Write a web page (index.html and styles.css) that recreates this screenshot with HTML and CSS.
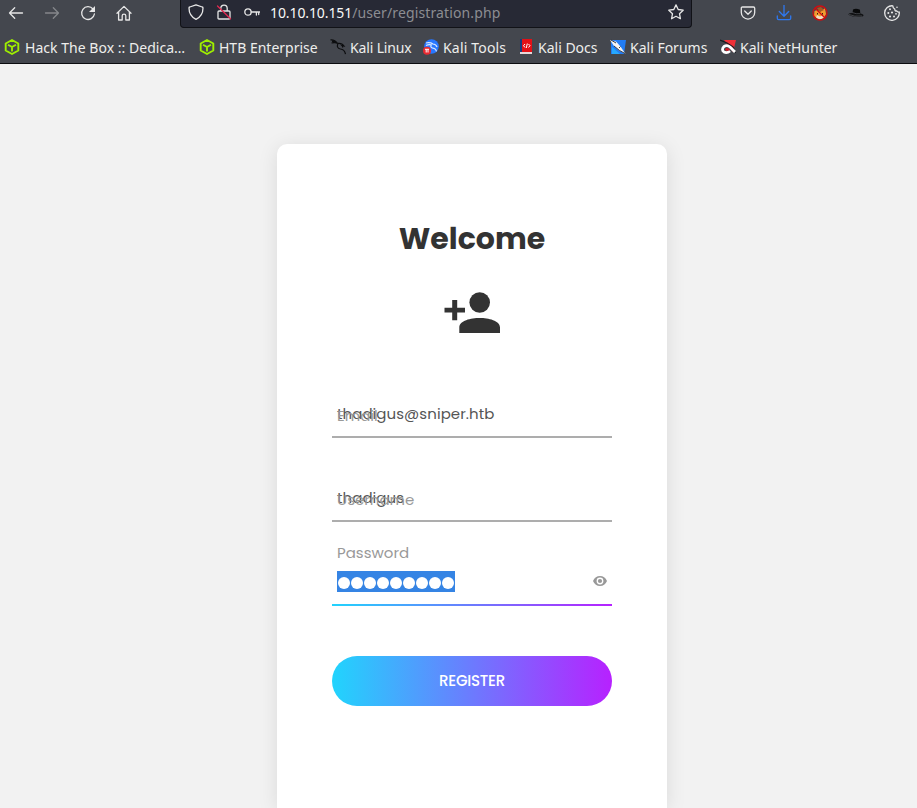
FILE: index.html
```html
<!DOCTYPE html>
<html lang="en">
<head>
<meta charset="utf-8">
<title>Registration</title>
<link rel="stylesheet" href="styles.css">
</head>
<body>
<header class="browser">
  <div class="toolbar">
    <nav class="nav">
      <svg class="ico" viewBox="0 0 16 16"><path d="M14.500 8H1.500M6.700 2.800 1.500 8l5.200 5.200"/></svg>
      <svg class="ico dim" viewBox="0 0 16 16"><path d="M1.500 8h13M9.300 2.800 14.500 8l-5.200 5.200"/></svg>
      <svg class="ico" viewBox="0 0 16 16"><path d="M13 4A6.400 6.400 0 1 0 14.400 9"/><path class="solid" d="M15 1v6H9z"/></svg>
      <svg class="ico" viewBox="0 0 16 16"><path d="M1 8.200 8 1.400l7 6.800M2.600 7v8h3.600v-4.200q0-1.600 1.800-1.600t1.800 1.600V15h3.600V7"/></svg>
    </nav>
    <div class="urlbar">
      <svg class="ico" viewBox="0 0 16 16"><path d="M8 .8 14.200 3Q15 3.200 15 4q0 8-7 11.300Q1 12 1 4q0-.8.8-1z"/></svg>
      <svg class="ico" viewBox="0 0 16 16"><path d="M4.800 7V4.400a3.200 3.200 0 0 1 6.400 0V7M3 7h10q1 0 1 1v6.200q0 .8-1 .8H3q-1 0-1-.8V8q0-1 1-1z"/><path class="slash" d="m1.500 2 13 12.700"/></svg>
      <svg class="ico" viewBox="0 0 16 16"><circle cx="4" cy="8" r="3.200"/><path d="M7.200 8H16M12.400 8v3M14.700 8v2.500"/></svg>
      <span class="url"><b>10.10.10.151</b>/user/registration.php</span>
      <svg class="ico star" viewBox="0 0 16 16"><path d="m8 .9 2.200 4.600 5 .7-3.700 3.500.9 5L8 12.300l-4.400 2.400.9-5L.8 6.200l5-.7z"/></svg>
    </div>
    <div class="tools">
      <svg class="ico" viewBox="0 0 16 16"><path d="M2.500 2h11q1.200 0 1.200 1.200V7.400a6.700 6.700 0 0 1-13.400 0V3.200Q1.300 2 2.500 2z"/><path d="m4.700 6 3.300 3.200L11.300 6"/></svg>
      <svg class="ico blue" viewBox="0 0 16 16"><path d="M8 0v11M3.300 6.500 8 11.200l4.700-4.700M1.300 11v2.300q0 1.400 1.400 1.400h10.600q1.400 0 1.400-1.400V11"/></svg>
      <svg class="art" viewBox="0 0 16 16"><path d="m2.500 6 2.700-1 3 1.500L13 3l1 6-2 4-5 1.700L2 11z" fill="#f29a2e"/><path d="m5 10 3 1.500 3-1.500 1 2.500-4 2-4-2z" fill="#eee0c8"/><path d="m5 3 4-1 3 3-4 2z" fill="#a55b23"/><path d="M5.500 8v1.500M10.500 8v1.500" stroke="#352015"/><circle cx="8" cy="8" r="7" fill="none" stroke="#d20d10" stroke-width="1.300"/><path d="m3 3 10 10" stroke="#d20d10" stroke-width="1.300"/></svg>
      <svg class="art" viewBox="0 0 16 16"><ellipse cx="8" cy="9.800" rx="7.600" ry="2" transform="rotate(5 8 9.800)" fill="#111214"/><path d="m4.500 8 .5-3.500Q8 3 12 4.800l.3 4.200Q8 10.500 4.500 8z" fill="#08090a"/><path d="M4.200 7.500q4 1.800 8 1.200M1 9.500q5 2.500 13 1.500" stroke="#575a60" stroke-width=".7" fill="none"/></svg>
      <svg class="ico" viewBox="0 0 16 16"><path d="M8.800.8A7.300 7.300 0 1 0 15.200 7q-1.500.5-2.400-1-2 .2-2-1.800-2-.8-2-3.400z"/><g class="solid"><circle cx="6" cy="4.300" r="1"/><circle cx="4.300" cy="8" r="1"/><circle cx="8" cy="7.500" r="1.100"/><circle cx="6" cy="11.500" r="1.100"/><circle cx="10" cy="11.500" r="1"/><circle cx="12" cy="8.800" r=".9"/><circle cx="13" cy="2.200" r=".8"/></g></svg>
    </div>
  </div>
  <div class="bookmarks">
    <a class="bm first"><svg class="art htb" viewBox="0 0 16 16"><path d="m8 1 6.300 3.500v7L8 15l-6.300-3.500v-7zM4 5.700 8 8l4-2.300M8 8v4.500"/></svg><span>Hack The Box :: Dedica…</span></a>
    <a class="bm"><svg class="art htb" viewBox="0 0 16 16"><path d="m8 1 6.300 3.500v7L8 15l-6.300-3.500v-7zM4 5.700 8 8l4-2.300M8 8v4.500"/></svg><span>HTB Enterprise</span></a>
    <a class="bm linux"><svg class="art" viewBox="0 0 16 16"><path d="M.5.800Q5 .5 7.500 4.300M1.500 4q4-1 6.500.4 4-.5 6 2.600l-2-.5q1 1 .5 2M8 4.500Q6 9 10.500 10q4 .5 5 5M2 2.400q3 0 5 2" fill="none" stroke="#0c0d0f" stroke-width="1.200"/></svg><span>Kali Linux</span></a>
    <a class="bm tool"><svg class="art" viewBox="0 0 16 16"><circle cx="8.500" cy="7.500" r="7.300" fill="#2777ff"/><path d="M3 4q4-1 7 1 3 .3 4 3M8 6q-1 3 3 3.300 2 .5 2.500 3M3 6.500q3-1.500 6-.5" fill="none" stroke="#d9e9ff" stroke-width="1.200"/><circle cx="4" cy="11.800" r="4" fill="#e82930"/><path d="M2 10.300h4M3.200 10.500v3M5 10.500v3" stroke="#fff" fill="none"/></svg><span>Kali Tools</span></a>
    <a class="bm"><svg class="art" viewBox="0 0 16 16"><path d="M2 0h12v13H2z" fill="#e31016"/><path d="M2 0h2v13H2z" fill="#163c7b"/><path d="M2 13h12v2H2z" fill="#e6d7d9"/><path d="M7 5 5.500 6.700 7 8.500M10.500 5 12 6.700l-1.500 1.800M9.300 4.500 8.300 9" fill="none" stroke="#fff"/></svg><span>Kali Docs</span></a>
    <a class="bm"><svg class="art" viewBox="0 0 16 16"><path d="M1 1h15l-2 14H1z" fill="#227df5"/><path d="M2 8v7h8z" fill="#26a9ff"/><path d="m0 1 6 1.500 4.500 5L15.500 15 9 11.500 4 7z" fill="#f4f4f4"/><path d="m1 1 5 3M4 7l5.500 4.500 5.500 3M10.500 7.500 9 9" fill="none" stroke="#242932" stroke-width=".9"/></svg><span>Kali Forums</span></a>
    <a class="bm"><svg class="art" viewBox="0 0 16 16"><path d="M4 1h12l-3 12z" fill="#ef3038"/><path d="m0 1 7 3 6 4 3 6" stroke="#17191d" stroke-width="1.200" fill="none"/><path d="m15 13-5-5Q7 5.500 4 7.500q-3 3 0 5.500 3 1.500 6-1" fill="none" stroke="#fff" stroke-width="2.800"/><path d="m10 11-3 1-2-1 1-2 3 .5z" fill="#d51b27"/></svg><span>Kali NetHunter</span></a>
  </div>
</header>
<main class="page">
  <form class="card">
    <h1>Welcome</h1>
    <svg class="adduser" viewBox="0 0 56 42"><circle cx="35.700" cy="10.500" r="10.300"/><path d="M15.300 41v-5.500C15.300 28.500 27 26 35.700 26S56 28.500 56 35.500V41zM8.200 8h5v7.700H21v4.800h-7.800v7.800h-5v-7.800H.5v-4.800h7.700z"/></svg>
    <div class="field email"><span class="value">thadigus@sniper.htb</span><span class="label">Email</span></div>
    <div class="field user"><span class="value">thadigus</span><span class="label">Username</span></div>
    <div class="field password">
      <span class="label raised">Password</span>
      <span class="dots"><i></i><i></i><i></i><i></i><i></i><i></i><i></i><i></i><i></i></span>
      <svg class="eye" viewBox="0 0 14 10"><path fill-rule="evenodd" d="M7 0Q11.800 0 14 5q-2.200 5-7 5T0 5q2.200-5 7-5zm0 1.600a3.400 3.400 0 1 0 0 6.800 3.400 3.400 0 0 0 0-6.800z"/><circle cx="7" cy="5" r="2.100"/></svg>
    </div>
    <button class="register" type="button">REGISTER</button>
  </form>
</main>
</body>
</html>
```
FILE: styles.css
```css
* { box-sizing: border-box; }
body { margin: 0; height: 808px; overflow: hidden; background: #f2f2f2; font-family: Poppins, Inter, sans-serif; }
.browser { height: 64px; background: #44474e; border-bottom: 1px solid #0c0d10; font-family: "Noto Sans", sans-serif; font-size: 14px; color: #eeeeec; }
.toolbar { display: flex; height: 28px; padding-left: 8px; }
.nav, .tools { display: flex; align-items: center; gap: 20px; height: 25px; }
.ico, .art { display: block; width: 16px; height: 16px; flex: none; }
.ico { fill: none; stroke: #e6e6e6; stroke-width: 1.3; stroke-linecap: round; stroke-linejoin: round; }
.solid { fill: #e6e6e6; stroke: none; }
.dim { stroke: #85878b; }
.blue { stroke: #2f78ee; }
.ico .slash { stroke: #e22850; }
.urlbar { display: flex; align-items: center; gap: 12px; width: 512px; height: 28px; margin: 0 48px; padding: 0 7px 3px; background: #272935; border: 1px solid #111217; border-top: 0; border-radius: 0 0 4px 4px; }
.url { margin-left: -2px; color: #8c8d92; letter-spacing: .12px; white-space: nowrap; }
.url b { font-weight: 400; color: #f8f8f8; letter-spacing: -.1px; }
.star { margin-left: auto; }
.bookmarks { display: grid; grid-template-columns: 195px 131px 93px 95px 92px 110px 130px; height: 35px; padding: 3px 0 0 4px; align-items: center; }
.bm { display: flex; align-items: center; gap: 4px; white-space: nowrap; }
.first { gap: 5px; letter-spacing: .03px; }
.linux { letter-spacing: -.15px; }
.tool { letter-spacing: .18px; }
.htb { fill: none; stroke: #9fef00; stroke-width: 1.9; stroke-linejoin: round; }
.page { display: flex; justify-content: center; padding: 80px 0 0 27px; }
.card { display: flex; flex-direction: column; align-items: stretch; width: 390px; height: 664px; padding: 77px 55px 0; background: #fff; border-radius: 10px 10px 0 0; box-shadow: 0 3px 20px rgba(0, 0, 0, .1); }
h1 { margin: 0; height: 36px; line-height: 36px; font-size: 30px; font-weight: 700; text-align: center; color: #333; }
.adduser { width: 56px; height: 42px; margin: 35px auto 0; fill: #333; }
.field { display: grid; align-content: center; height: 45px; padding: 0 5px 2px; border-bottom: 2px solid #adadad; font-size: 15px; line-height: 22px; }
.email { margin-top: 59px; }
.user { margin-top: 39px; }
.value, .label { grid-area: 1 / 1; white-space: nowrap; }
.value { color: #555; letter-spacing: .06px; }
.label { color: #999; padding-top: 2px; margin-bottom: -2px; }
.password { grid-template: 29px 21px 12px / 1fr 14px; align-content: start; height: 64px; margin-top: 20px; padding-bottom: 0; border-image: linear-gradient(90deg, #21d4fd, #b721ff) 1; }
.raised { padding: 0; margin: 0; }
.dots { grid-area: 2 / 1; display: flex; align-items: center; gap: 1px; width: 118px; height: 21px; padding: 3px 0 0 1px; background: #3584e4; }
.dots i { width: 12px; height: 12px; border-radius: 50%; background: #fff; }
.eye { grid-area: 2 / 2; align-self: start; width: 14px; height: 10px; margin-top: 5px; fill: #999; }
.register { height: 50px; margin-top: 50px; padding: 0 0 1px; border: 0; border-radius: 25px; background: linear-gradient(90deg, #21d4fd, #b721ff); color: #fff; font: 500 15px Poppins, Inter, sans-serif; letter-spacing: -.25px; }
```
